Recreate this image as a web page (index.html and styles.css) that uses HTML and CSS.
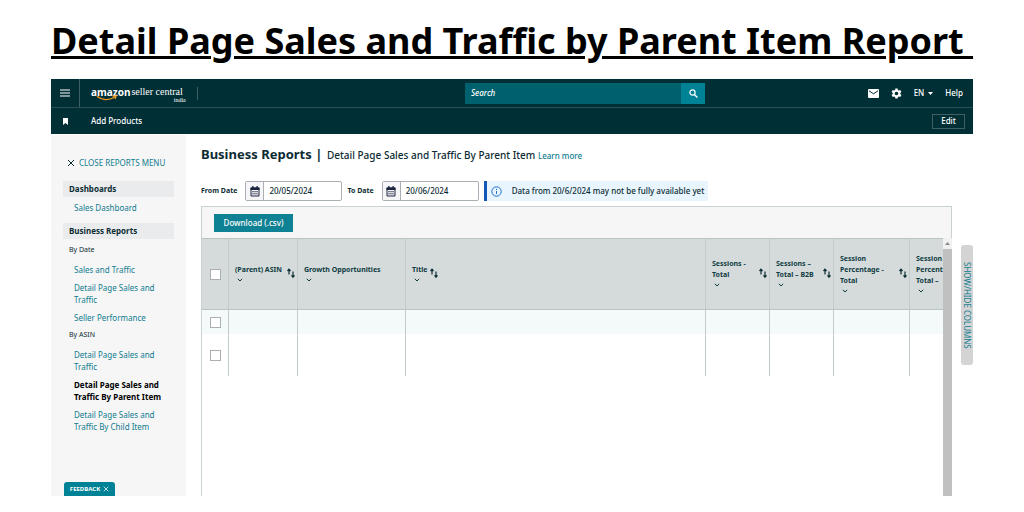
FILE: index.html
```html
<!DOCTYPE html>
<html lang="en">
<head>
<meta charset="utf-8">
<meta name="viewport" content="width=device-width, initial-scale=1">
<title>Detail Page Sales and Traffic by Parent Item Report</title>
<link rel="stylesheet" href="styles.css">
</head>
<body>
<svg class="sprite" aria-hidden="true">
  <symbol id="sort" viewBox="0 0 8 10"><path d="M2 6.500V1.500M.5 3 2 1.200 3.500 3M6 3.500V9M4.500 7.300 6 9.200 7.500 7.300" fill="none" stroke="currentColor" stroke-width="1.200"/></symbol>
  <symbol id="chev" viewBox="0 0 6 4"><path d="M.8.8 3 3 5.200.8" fill="none" stroke="currentColor" stroke-width="1"/></symbol>
  <symbol id="cal" viewBox="0 0 10 11"><path d="M1 2h8v8H1z" fill="none" stroke="currentColor" stroke-width="1"/><path d="M.5 1.500h9V4h-9zM2.200 0h1.300v2H2.200zM6.500 0h1.300v2H6.500z" fill="currentColor"/><path d="M2 5.700h6M2 7.800h6" stroke="currentColor" stroke-width=".7"/></symbol>
  <symbol id="close" viewBox="0 0 8 8"><path d="m1 1 6 6M7 1 1 7" fill="none" stroke="currentColor" stroke-width="1"/></symbol>
</svg>
<h1 class="headline">Detail Page Sales and Traffic by Parent Item Report&nbsp;</h1>
<div class="app">
  <header class="topbar">
    <div class="bar">
      <button class="menu" aria-label="Menu"><svg width="10" height="8" viewBox="0 0 10 8"><path d="M0 1h10M0 4h10M0 7h10" stroke="#fff" stroke-width="1.200"/></svg></button>
      <a class="brand" href="#">
        <span class="brand-mark">amazon<svg class="smile" width="22" height="6" viewBox="0 0 22 6"><path d="M1 1.200C6 5.500 13 5.500 18.500 2.200M16.500 1.200l3.500-.2-1 3" fill="none" stroke="#f79a1e" stroke-width="1.300"/></svg></span>
        <span class="brand-name">seller central</span>
        <span class="brand-country">india</span>
      </a>
      <form class="search">
        <input type="search" placeholder="Search" aria-label="Search">
        <button type="button" aria-label="Submit search"><svg width="9" height="9" viewBox="0 0 9 9"><circle cx="3.500" cy="3.500" r="2.600" fill="none" stroke="#fff" stroke-width="1.200"/><path d="m5.400 5.400 3 3" stroke="#fff" stroke-width="1.400"/></svg></button>
      </form>
      <nav class="tools">
        <a href="#" aria-label="Messages"><svg width="11" height="9" viewBox="0 0 11 9"><rect width="11" height="9" rx="1" fill="#fff"/><path d="m1 1.800 4.500 3L10 1.800" fill="none" stroke="#002f36" stroke-width="1"/></svg></a>
        <a href="#" aria-label="Settings"><svg width="11" height="11" viewBox="0 0 24 24"><path fill="#fff" fill-rule="evenodd" d="M9.500 1h5l.6 3.200 2 1.200 3.100-1.100 2.500 4.300-2.500 2.200v2.400l2.500 2.200-2.500 4.300-3.100-1.100-2 1.200-.6 3.200h-5l-.6-3.200-2-1.200-3.100 1.100-2.500-4.300 2.500-2.200v-2.400L1.300 8.600l2.500-4.300 3.100 1.100 2-1.200zM12 8a4 4 0 1 0 0 8 4 4 0 0 0 0-8z"/></svg></a>
        <button class="lang">EN <svg width="5" height="3" viewBox="0 0 5 3"><path d="M0 0h5L2.500 3z" fill="#fff"/></svg></button>
        <a href="#">Help</a>
      </nav>
    </div>
    <div class="bar favorites">
      <span class="bookmark"><svg width="5" height="7" viewBox="0 0 5 7"><path d="M0 0h5v7L2.500 5 0 7z" fill="#fff"/></svg></span>
      <a href="#">Add Products</a>
      <button class="edit">Edit</button>
    </div>
  </header>
  <div class="body">
    <aside class="side">
      <button class="close"><svg width="8" height="8"><use href="#close"/></svg>CLOSE REPORTS MENU</button>
      <h2>Dashboards</h2>
      <ul class="first"><li><a href="#">Sales Dashboard</a></li></ul>
      <h2>Business Reports</h2>
      <h3>By Date</h3>
      <ul>
        <li><a href="#">Sales and Traffic</a></li>
        <li><a href="#">Detail Page Sales and Traffic</a></li>
        <li><a href="#">Seller Performance</a></li>
      </ul>
      <h3>By ASIN</h3>
      <ul>
        <li><a href="#">Detail Page Sales and Traffic</a></li>
        <li><a href="#" class="current" aria-current="page">Detail Page Sales and Traffic By Parent Item</a></li>
        <li><a href="#">Detail Page Sales and Traffic By Child Item</a></li>
      </ul>
      <button class="feedback">FEEDBACK <svg width="6" height="6"><use href="#close"/></svg></button>
    </aside>
    <main class="main">
      <div class="heading"><h2>Business Reports |</h2> <span>Detail Page Sales and Traffic By Parent Item</span> <a href="#">Learn more</a></div>
      <div class="filters">
        <label for="from">From Date</label>
        <div class="date"><button aria-label="Choose from date"><svg width="10" height="11"><use href="#cal"/></svg></button><input id="from" type="text" value="20/05/2024"></div>
        <label for="to">To Date</label>
        <div class="date"><button aria-label="Choose to date"><svg width="10" height="11"><use href="#cal"/></svg></button><input id="to" type="text" value="20/06/2024"></div>
        <p class="notice"><svg width="11" height="11" viewBox="0 0 11 11"><circle cx="5.500" cy="5.500" r="4.700" fill="none" stroke="#1b6fd0"/><path d="M5.500 5v3M5.500 2.800v1.200" stroke="#1b6fd0"/></svg>Data from 20/6/2024 may not be fully available yet</p>
      </div>
      <div class="report">
        <section class="panel">
          <div class="actions"><button class="download">Download (.csv)</button></div>
          <div class="viewport">
            <div class="scroller">
              <table>
                <colgroup><col class="c-check"><col class="c-asin"><col class="c-growth"><col><col class="c-num"><col class="c-num"><col class="c-pct"><col class="c-pct"></colgroup>
                <thead><tr>
                  <th class="check"><input type="checkbox" aria-label="Select all"></th>
                  <th><div class="col"><span>(Parent) ASIN</span><svg class="sort" width="8" height="10"><use href="#sort"/></svg></div><svg class="chev" width="6" height="4"><use href="#chev"/></svg></th>
                  <th><div class="col"><span>Growth Opportunities</span></div><svg class="chev" width="6" height="4"><use href="#chev"/></svg></th>
                  <th><div class="col snug"><span>Title</span><svg class="sort" width="8" height="10"><use href="#sort"/></svg></div><svg class="chev" width="6" height="4"><use href="#chev"/></svg></th>
                  <th><div class="col"><span>Sessions -<br>Total</span><svg class="sort" width="8" height="10"><use href="#sort"/></svg></div><svg class="chev" width="6" height="4"><use href="#chev"/></svg></th>
                  <th><div class="col"><span>Sessions –<br>Total – B2B</span><svg class="sort" width="8" height="10"><use href="#sort"/></svg></div><svg class="chev" width="6" height="4"><use href="#chev"/></svg></th>
                  <th><div class="col"><span>Session<br>Percentage -<br>Total</span><svg class="sort" width="8" height="10"><use href="#sort"/></svg></div><svg class="chev" width="6" height="4"><use href="#chev"/></svg></th>
                  <th><div class="col"><span>Session<br>Percentage<br>Total –</span></div><svg class="chev" width="6" height="4"><use href="#chev"/></svg></th>
                </tr></thead>
                <tbody>
                  <tr class="r1"><td class="check"><input type="checkbox" aria-label="Select row 1"></td><td></td><td></td><td></td><td></td><td></td><td></td><td></td></tr>
                  <tr class="r2"><td class="check"><input type="checkbox" aria-label="Select row 2"></td><td></td><td></td><td></td><td></td><td></td><td></td><td></td></tr>
                </tbody>
              </table>
            </div>
            <div class="scrollbar"><span class="up"><svg width="5" height="3" viewBox="0 0 5 3"><path d="M0 3h5L2.500 0z" fill="#8a8a8a"/></svg></span></div>
          </div>
        </section>
        <button class="columns">SHOW/HIDE COLUMNS</button>
      </div>
    </main>
  </div>
</div>
</body>
</html>
```

FILE: styles.css
```css
* { box-sizing: border-box; }
body {
  margin: 0;
  padding: 0 51px 16px;
  min-height: 100vh;
  display: flex;
  flex-direction: column;
  background: #fff;
  color: #0b2b33;
  font: 8px/12px "Noto Sans", sans-serif;
}
button, input { font: inherit; color: inherit; margin: 0; }
button { padding: 0; border: 0; background: none; cursor: pointer; }
a { color: #0f7c8f; text-decoration: none; }
h1, h2, h3, p, ul { margin: 0; padding: 0; }
ul { list-style: none; }
svg { display: block; flex: none; }
.sprite { position: absolute; width: 0; height: 0; }

.headline {
  height: 79px;
  padding-top: 14px;
  color: #000;
  font: 700 36px/54px "Noto Sans", sans-serif;
  text-align: center;
  white-space: nowrap;
  text-decoration: underline;
  text-decoration-thickness: 3px;
  text-underline-offset: 2px;
}
.app { flex: 1; display: flex; flex-direction: column; }

.topbar { background: #002f36; color: #fff; font-weight: 500; }
.topbar a { color: #fff; }
.bar { display: flex; align-items: center; height: 28px; }
.menu { width: 29px; height: 28px; padding-left: 9px; border-right: 1px solid #3f5f65; }
.brand { display: flex; gap: 1px; width: 107px; height: 13px; margin-left: 11px; flex: none; border-right: 1px solid #3f5f65; line-height: 10px; white-space: nowrap; }
.brand-mark { position: relative; font-size: 10px; font-weight: 700; }
.smile { position: absolute; left: 5px; top: 8px; }
.brand-name { font-family: "Liberation Serif", serif; font-size: 10px; }
.brand-country { align-self: flex-end; margin-left: -10px; margin-bottom: -3px; font: 6px/6px "Liberation Serif", serif; }
.search { display: flex; width: 240px; height: 21px; margin-left: auto; }
.search input { flex: 1; min-width: 0; border: 0; padding: 0 6px; background: #00616e; font-style: italic; outline: 0; }
.search input::placeholder { color: #fff; opacity: 1; }
.search button { width: 24px; display: grid; place-items: center; background: #008296; }
.tools { display: flex; align-items: center; gap: 12px; flex: 1; max-width: 268px; justify-content: flex-end; padding-right: 10px; }
.lang { display: flex; align-items: center; gap: 4px; }
.favorites { height: 27px; border-top: 1px solid #2c4f56; }
.bookmark { width: 40px; padding-left: 12px; }
.edit { width: 33px; height: 15px; margin-left: auto; margin-right: 8px; border: 1px solid #3f5f65; }

.body { flex: 1; display: flex; padding-top: 1px; }
.side {
  width: 135px; flex: none;
  display: flex; flex-direction: column; align-items: stretch;
  padding: 22px 12px 0;
  background: #f6f6f6;
}
.close { display: flex; align-items: center; gap: 4px; height: 12px; margin: 0 0 12px 4px; color: #0f7c8f; white-space: nowrap; }
.close svg { color: #0b2b33; }
.side h2 { padding: 2px 6px; background: #eaebed; font-size: 8px; line-height: 12px; font-weight: 700; }
.side h3 { padding: 0 6px; margin-top: 5px; font-size: 7px; line-height: 12px; font-weight: 400; }
.side ul { display: grid; gap: 6px; margin: 8px 0 0 11px; }
.side ul.first { margin: 5px 0 9px 11px; }
.side .current { color: #000; font-weight: 700; }
.side a { display: block; }
.feedback {
  display: flex; align-items: center; justify-content: center; gap: 3px;
  width: 51px; height: 14px; margin: auto 0 0 1px;
  border-radius: 3px 3px 0 0;
  background: #008296; color: #fff; font-size: 6px; font-weight: 700;
}

.main { flex: 1; min-width: 0; display: flex; flex-direction: column; padding-left: 15px; }
.heading { padding-top: 9px; line-height: 20px; font-size: 10px; font-weight: 500; white-space: nowrap; }
.heading h2 { display: inline; margin-right: 2px; font-size: 13px; font-weight: 700; }
.heading a { font-size: 8px; }
.filters { display: flex; align-items: center; height: 20px; margin-top: 15px; }
.filters label { font-size: 7px; font-weight: 700; margin-right: 8px; white-space: nowrap; }
.date { display: flex; width: 97px; height: 20px; margin-right: 5px; border: 1px solid #a9afb5; border-radius: 2px; }
.date button { width: 18px; display: grid; place-items: center; border-right: 1px solid #a9afb5; color: #1c2340; background: #f6f6f8; }
.date input { flex: 1; min-width: 0; padding: 0 5px; border: 0; outline: 0; background: none; font-size: 8px; font-weight: 500; }
.notice { display: flex; align-items: center; gap: 10px; height: 20px; padding: 0 4px; border-left: 3px solid #1259b8; background: #e8f5fe; font-weight: 500; white-space: nowrap; }

.report { flex: 1; display: flex; align-items: flex-start; gap: 9px; margin-top: 5px; }
.panel { flex: 1; min-width: 0; align-self: stretch; display: flex; flex-direction: column; border-left: 1px solid #c9d1d1; }
.actions { height: 32px; padding: 7px 12px; border-top: 1px solid #c9d1d1; border-right: 1px solid #c9d1d1; background: #f6f6f6; }
.download { width: 79px; height: 18px; background: #0f8194; color: #fff; font-weight: 500; }
.viewport { flex: 1; display: flex; }
.scroller { flex: 1; min-width: 0; overflow: hidden; }
table { width: calc(100% + 42px); table-layout: fixed; border-collapse: separate; border-spacing: 0; }
.c-check { width: 26px; }
.c-asin { width: 69px; }
.c-growth { width: 108px; }
.c-num { width: 64px; }
.c-pct { width: 76px; }
th, td { padding: 0; border-left: 1px solid #c1cbcb; }
th { height: 72px; padding: 0 2px 3px 6px; background: #d5dbdb; border-top: 1px solid #b9c3c3; border-bottom: 1px solid #b9c3c3; text-align: left; font-size: 7px; line-height: 11px; font-weight: 700; color: #0f3b42; white-space: nowrap; }
.check { border-left: 0; padding: 0 0 0 8px; }
.r1 td { height: 24px; background: #f4f9fa; }
.r2 td { height: 42px; }
.col { display: flex; justify-content: space-between; align-items: center; }
.col.snug { justify-content: flex-start; gap: 3px; }
.sort { margin: 4px 0 -4px; color: #0b2b33; }
.chev { margin: 3px 0 0 2px; }
input[type="checkbox"] { appearance: none; display: block; width: 11px; height: 11px; border: 1px solid #aab0b2; background: #fff; }
.scrollbar { width: 9px; display: flex; flex-direction: column; background: #c0c0c0; }
.up { height: 11px; display: grid; place-items: center; background: #f1f1f1; }
.columns {
  width: 12px; height: 120px; margin-top: 39px; flex: none;
  border-radius: 3px; background: #d4d4d4; color: #0f7c8f;
  writing-mode: vertical-rl; line-height: 12px; white-space: nowrap;
}
```
